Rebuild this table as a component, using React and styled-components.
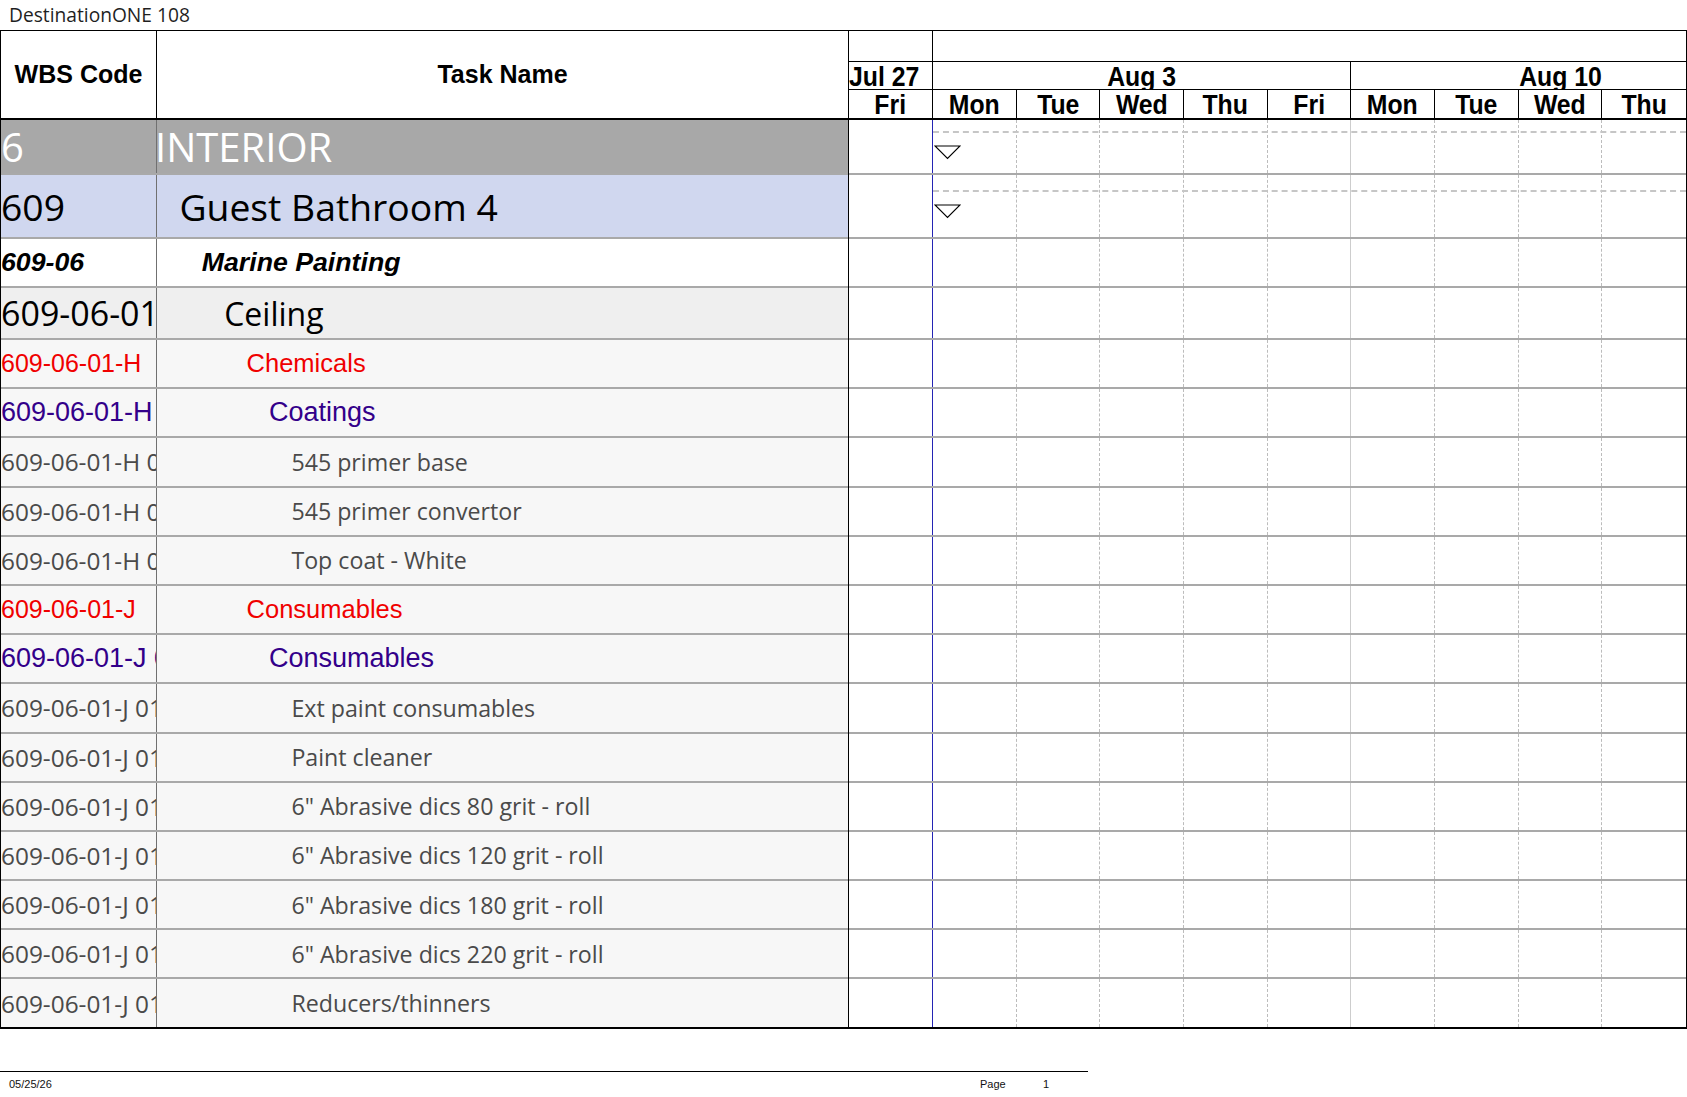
import React from 'react';
import styled, { createGlobalStyle, css } from 'styled-components';

const GlobalStyle = createGlobalStyle`
  *, *::before, *::after { box-sizing: border-box; }
  html, body { margin: 0; padding: 0; background: #fff; }
  body {
    width: 1687px;
    height: 1097px;
    overflow: hidden;
    font-family: 'Liberation Sans', Arial, sans-serif;
    color: #000;
  }
`;

// text looks per outline level
const kinds = {
  phase: css`
    font-family: 'Open Sans', sans-serif;
    font-size: 40px;
    color: #fff;
  `,
  area: css`
    font-family: 'Open Sans', sans-serif;
    font-size: 37.3px;
    color: #000;
  `,
  trade: css`
    font-family: 'Liberation Sans', Arial, sans-serif;
    font-size: 26.7px;
    font-weight: bold;
    font-style: italic;
    color: #000;
  `,
  zone: css`
    font-family: 'Open Sans', sans-serif;
    font-size: 32px;
    color: #000;
  `,
  group: css`
    font-family: 'Liberation Sans', Arial, sans-serif;
    font-size: 25.5px;
    color: #f00000;
  `,
  sub: css`
    font-family: 'Liberation Sans', Arial, sans-serif;
    font-size: 27px;
    color: #33008a;
  `,
  item: css`
    font-family: 'Open Sans', sans-serif;
    font-size: 23.2px;
    color: #4a4a4a;
  `,
};

// the code column runs a touch wider than the names in a few levels
const codeSize = {
  zone: 34,
  group: 25,
  item: 24.4,
};

const rowBg = {
  phase: '#a8a8a8',
  area: '#d0d7ef',
  trade: '#ffffff',
  zone: '#efefef',
  group: '#f7f7f7',
  sub: '#f7f7f7',
  item: '#f7f7f7',
};

const Page = styled.div`
  width: 1687px;
  display: flex;
  flex-direction: column;
`;

const TitleBar = styled.div`
  height: 30px;
  padding-left: 9px;
  font-family: 'Open Sans', sans-serif;
  font-size: 19.2px;
  line-height: 30px;
  color: #1f1f1f;
`;

const Sheet = styled.div`
  display: flex;
  border-top: 1px solid #000;
  border-bottom: 2px solid #000;
`;

const Grid = styled.div`
  width: 848px;
  flex-shrink: 0;
  border-left: 1px solid #000;
`;

const HeadRow = styled.div`
  display: flex;
  height: 89px;
  border-bottom: 2px solid #000;
`;

const HeadCell = styled.div`
  display: flex;
  align-items: center;
  justify-content: center;
  font-family: 'Liberation Sans', Arial, sans-serif;
  font-weight: bold;
  font-size: 25px;
  ${p => p.$code ? css`
    width: 156px;
    flex-shrink: 0;
    border-right: 1px solid #000;
  ` : css`
    flex: 1;
  `}
`;

const Row = styled.div`
  display: flex;
  height: ${p => p.$h}px;
  background: ${p => rowBg[p.$kind]};
  border-bottom: ${p => p.$last ? 'none' : '2px solid #a9a9a9'};
`;

const CodeCell = styled.div`
  width: 156px;
  flex-shrink: 0;
  display: flex;
  align-items: center;
  overflow: hidden;
  white-space: nowrap;
  border-right: 1px solid #707070;
  ${p => kinds[p.$kind]}
  ${p => codeSize[p.$kind] && css`font-size: ${codeSize[p.$kind]}px;`}
`;

const NameCell = styled.div`
  flex: 1;
  display: flex;
  align-items: center;
  overflow: hidden;
  white-space: nowrap;
  padding-left: ${p => p.$level * 22.4}px;
  ${p => kinds[p.$kind]}
  ${p => p.$level === 0 && css`margin-left: -2px;`}
`;

const Chart = styled.div`
  flex: 1;
  min-width: 0;
  border-left: 1px solid #000;
  border-right: 1px solid #000;
`;

const Tier = styled.div`
  display: grid;
  grid-template-columns: ${p => p.$cols};
  height: ${p => p.$h}px;
  overflow: hidden;
  border-bottom: ${p => p.$thick ? 2 : 1}px solid #000;
`;

const TierCell = styled.div`
  display: flex;
  align-items: center;
  justify-content: ${p => p.$start ? 'flex-start' : 'center'};
  padding-left: ${p => p.$shift || 0}px;
  overflow: hidden;
  white-space: nowrap;
  border-right: 1px solid #000;
  &:last-child { border-right: none; }
`;

// no narrow face installed, so squeeze the bold sans sideways
const TierLabel = styled.span`
  display: inline-block;
  font-family: 'Liberation Sans', Arial, sans-serif;
  font-weight: bold;
  font-size: 28.5px;
  line-height: 26px;
  transform: scaleX(0.87);
  transform-origin: ${p => p.$start ? 'left center' : 'center'};
`;

const ChartRow = styled.div`
  position: relative;
  display: grid;
  grid-template-columns: 84px repeat(9, 1fr);
  height: ${p => p.$h}px;
  border-bottom: ${p => p.$last ? 'none' : '2px solid #a9a9a9'};
`;

const lineStyles = {
  today: '1px solid #2424b4',
  dash: '1px dashed #bcbcbc',
  week: '1px solid #cdcdcd',
  none: 'none',
};

const DayCell = styled.div`
  border-right: ${p => lineStyles[p.$line]};
`;

const SummaryLine = styled.div`
  position: absolute;
  left: 84px;
  right: 0;
  top: ${p => p.$top}px;
  border-top: 2px dashed #c6c6c6;
`;

const Milestone = styled.svg`
  position: absolute;
  left: 85px;
  top: ${p => p.$top}px;
`;

const Footer = styled.div`
  width: 1088px;
  margin-top: 42px;
  padding: 6px 0 0 9px;
  border-top: 1px solid #000;
  display: grid;
  grid-template-columns: 971px 63px auto;
  font-family: 'Liberation Sans', Arial, sans-serif;
  font-size: 11px;
  line-height: 13px;
  color: #111;
`;

const rows = [
  { code: '6', name: 'INTERIOR', kind: 'phase', level: 0, h: 55, bar: [11, 25] },
  { code: '609', name: 'Guest Bathroom 4', kind: 'area', level: 1, h: 64, bar: [15, 29] },
  { code: '609-06', name: 'Marine Painting', kind: 'trade', level: 2, h: 49 },
  { code: '609-06-01', name: 'Ceiling', kind: 'zone', level: 3, h: 52 },
  { code: '609-06-01-H', name: 'Chemicals', kind: 'group', level: 4 },
  { code: '609-06-01-H 01', name: 'Coatings', kind: 'sub', level: 5 },
  { code: '609-06-01-H 01 01', name: '545 primer base', kind: 'item', level: 6 },
  { code: '609-06-01-H 01 02', name: '545 primer convertor', kind: 'item', level: 6 },
  { code: '609-06-01-H 01 03', name: 'Top coat - White', kind: 'item', level: 6 },
  { code: '609-06-01-J', name: 'Consumables', kind: 'group', level: 4 },
  { code: '609-06-01-J 01', name: 'Consumables', kind: 'sub', level: 5 },
  { code: '609-06-01-J 01 01', name: 'Ext paint consumables', kind: 'item', level: 6 },
  { code: '609-06-01-J 01 02', name: 'Paint cleaner', kind: 'item', level: 6 },
  { code: '609-06-01-J 01 03', name: '6" Abrasive dics 80 grit - roll', kind: 'item', level: 6 },
  { code: '609-06-01-J 01 04', name: '6" Abrasive dics 120 grit - roll', kind: 'item', level: 6 },
  { code: '609-06-01-J 01 05', name: '6" Abrasive dics 180 grit - roll', kind: 'item', level: 6 },
  { code: '609-06-01-J 01 06', name: '6" Abrasive dics 220 grit - roll', kind: 'item', level: 6 },
  { code: '609-06-01-J 01 07', name: 'Reducers/thinners', kind: 'item', level: 6 },
];

const days = [
  { label: 'Fri', line: 'today' },
  { label: 'Mon', line: 'dash' },
  { label: 'Tue', line: 'dash' },
  { label: 'Wed', line: 'dash' },
  { label: 'Thu', line: 'dash' },
  { label: 'Fri', line: 'week' },
  { label: 'Mon', line: 'dash' },
  { label: 'Tue', line: 'dash' },
  { label: 'Wed', line: 'dash' },
  { label: 'Thu', line: 'none' },
];

const rowHeight = (r, i) => {
  const base = r.h || 49.2;
  return i === rows.length - 1 ? base - 2 : base;
};

function App() {
  return (
    <Page>
      <GlobalStyle />
      <TitleBar>DestinationONE 108</TitleBar>

      <Sheet>
        <Grid>
          <HeadRow>
            <HeadCell $code>WBS Code</HeadCell>
            <HeadCell>Task Name</HeadCell>
          </HeadRow>
          {rows.map((r, i) => (
            <Row key={i} $kind={r.kind} $h={rowHeight(r, i)} $last={i === rows.length - 1}>
              <CodeCell $kind={r.kind}>{r.code}</CodeCell>
              <NameCell $kind={r.kind} $level={r.level}>{r.name}</NameCell>
            </Row>
          ))}
        </Grid>

        <Chart>
          <Tier $cols="84px 1fr" $h={31}>
            <TierCell />
            <TierCell />
          </Tier>
          <Tier $cols="84px 5fr 4fr" $h={28}>
            <TierCell $start><TierLabel $start>Jul 27</TierLabel></TierCell>
            <TierCell><TierLabel>Aug 3</TierLabel></TierCell>
            <TierCell $shift={84}><TierLabel>Aug 10</TierLabel></TierCell>
          </Tier>
          <Tier $cols="84px repeat(9, 1fr)" $h={30} $thick>
            {days.map((d, i) => (
              <TierCell key={i}><TierLabel>{d.label}</TierLabel></TierCell>
            ))}
          </Tier>
          {rows.map((r, i) => (
            <ChartRow key={i} $h={rowHeight(r, i)} $last={i === rows.length - 1}>
              {days.map((d, j) => (
                <DayCell key={j} $line={d.line} />
              ))}
              {r.bar && <SummaryLine $top={r.bar[0]} />}
              {r.bar && (
                <Milestone $top={r.bar[1]} width="27" height="15" viewBox="0 0 27 15">
                  <polygon points="1,1 26,1 13.5,13.5" fill="#fff" stroke="#000" strokeWidth="1.2" />
                </Milestone>
              )}
            </ChartRow>
          ))}
        </Chart>
      </Sheet>

      <Footer>
        <span>05/25/26</span>
        <span>Page</span>
        <span>1</span>
      </Footer>
    </Page>
  );
}

export default App;
